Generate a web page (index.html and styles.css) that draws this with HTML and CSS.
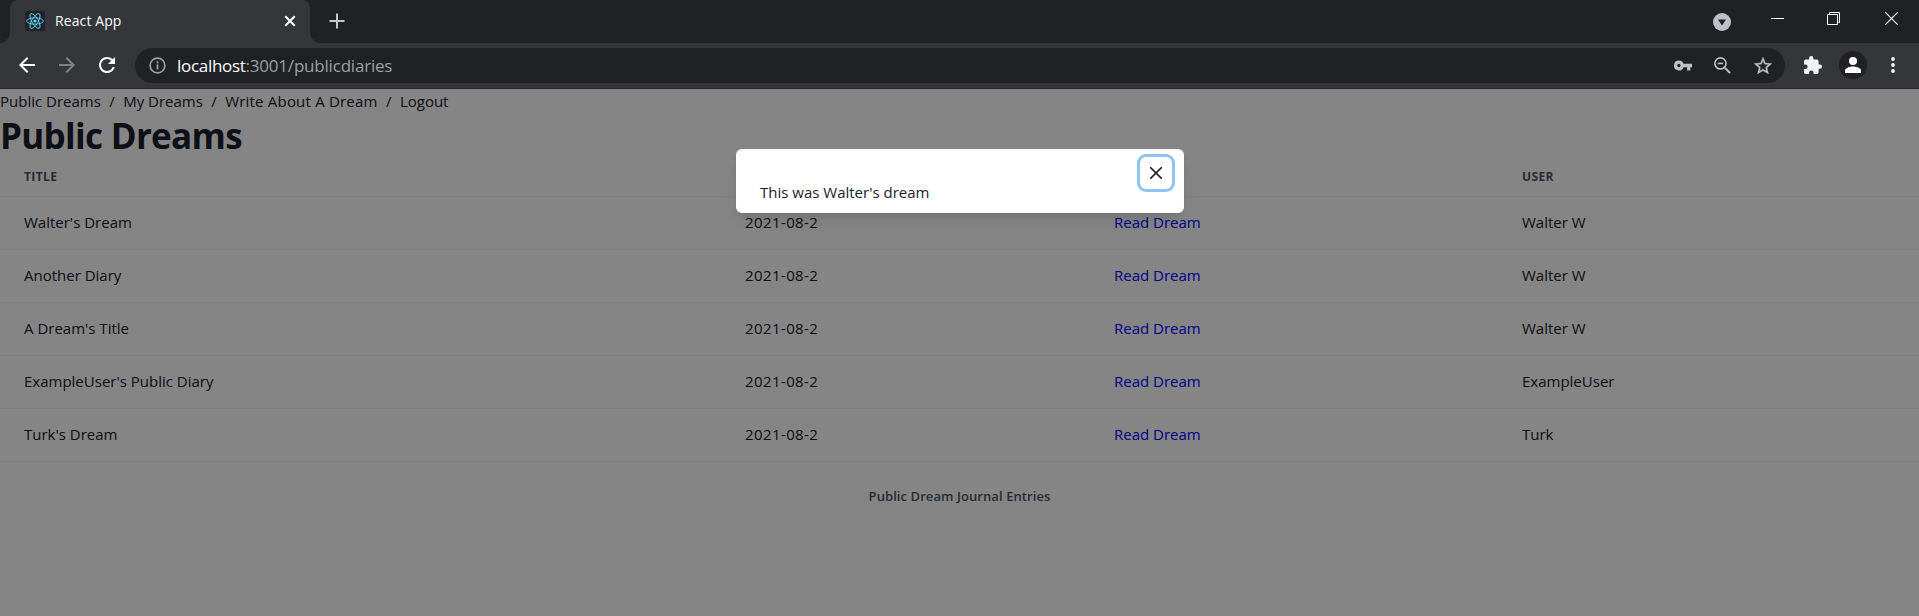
FILE: index.html
```html
<!DOCTYPE html>
<html lang="en">
<head>
<meta charset="utf-8">
<title>React App</title>
<link rel="stylesheet" href="styles.css">
</head>
<body>
<header class="browser">
  <div class="tabstrip">
    <div class="tab">
      <svg class="favicon" viewBox="0 0 20 20"><rect width="20" height="20" rx="2" fill="#20232a"/><g fill="none" stroke="#61dafb" stroke-width=".85"><ellipse cx="10" cy="10" rx="8.4" ry="3.2"/><ellipse cx="10" cy="10" rx="8.4" ry="3.2" transform="rotate(60 10 10)"/><ellipse cx="10" cy="10" rx="8.4" ry="3.2" transform="rotate(120 10 10)"/></g><circle cx="10" cy="10" r="1.6" fill="#61dafb"/></svg>
      <span class="tab-title">React App</span>
      <svg class="tab-close" viewBox="0 0 12 12"><path d="M1.3 1.3l9.4 9.4M10.7 1.3l-9.4 9.4" stroke="#fff" stroke-width="2"/></svg>
    </div>
    <svg class="new-tab" viewBox="0 0 16 16"><path d="M8 .5v15M.5 8h15" stroke="#c4c7cc" stroke-width="2"/></svg>
    <div class="window-controls">
      <svg class="tab-search" viewBox="0 0 18 18"><circle cx="9" cy="9" r="9" fill="#bdc1c6"/><path d="M5 6.5h8L9 12.5z" fill="#202124"/></svg>
      <svg class="minimize" viewBox="0 0 13 13"><path d="M0 6.5h13" stroke="#fff"/></svg>
      <svg class="restore" viewBox="0 0 13 13"><path d="M.5 2.5h10v10H.5zM2.5 2.5v-2h10v10h-2" fill="none" stroke="#fff"/></svg>
      <svg class="close" viewBox="0 0 13 13"><path d="M.3.3l12.4 12.4M12.7.3L.3 12.7" stroke="#fff" stroke-width="1.1"/></svg>
    </div>
  </div>
  <div class="toolbar">
    <svg class="nav-icon" viewBox="0 0 24 24"><path d="M20 11H7.83l5.59-5.59L12 4l-8 8 8 8 1.41-1.41L7.83 13H20z" fill="#fff"/></svg>
    <svg class="nav-icon" viewBox="0 0 24 24"><path d="M12 4l-1.41 1.41L16.17 11H4v2h12.17l-5.58 5.59L12 20l8-8z" fill="#818286"/></svg>
    <svg class="nav-icon reload" viewBox="0 0 24 24"><path d="M17.65 6.35A7.96 7.96 0 0012 4a8 8 0 107.73 10h-2.08A6 6 0 1112 6c1.66 0 3.14.69 4.22 1.78L13 11h7V4z" fill="#fff"/></svg>
    <div class="omnibox">
      <svg class="info" viewBox="0 0 17 17"><circle cx="8.5" cy="8.5" r="7.4" fill="none" stroke="#9aa0a6" stroke-width="1.7"/><path d="M8.5 7.5v5M8.5 4.3v2" stroke="#9aa0a6" stroke-width="1.8"/></svg>
      <span class="url"><span class="host">localhost</span><span class="path">:3001/publicdiaries</span></span>
      <svg class="key" viewBox="1 6 22 12"><path d="M12.65 10A6 6 0 007 6a6 6 0 105.65 8H17v4h4v-4h2v-4zM7 14a2 2 0 110-4 2 2 0 010 4z" fill="#bdc1c6"/></svg>
      <svg class="magnifier" viewBox="3 3 18 18"><path d="M14.5 14.500l5.500 5.500" stroke="#bdc1c6" stroke-width="2.200"/><circle cx="9.800" cy="9.800" r="5.900" fill="none" stroke="#bdc1c6" stroke-width="1.700"/><path d="M7 9.800h5.600" stroke="#bdc1c6" stroke-width="1.700"/></svg>
      <svg class="star" viewBox="2 2 20 19"><path d="M22 9.240l-7.190-.62L12 2 9.190 8.630 2 9.240l5.460 4.730L5.820 21 12 17.270 18.180 21l-1.630-7.030zM12 15.400l-3.760 2.270 1-4.280-3.320-2.880 4.380-.38L12 6.100l1.710 4.040 4.380.38-3.320 2.880 1 4.280z" fill="#bdc1c6" stroke="#bdc1c6" stroke-width=".3"/></svg>
    </div>
    <svg class="extensions" viewBox="2 1 21 21"><path d="M20.500 11H19V7a2 2 0 00-2-2h-4V3.500a2.500 2.500 0 00-5 0V5H4a2 2 0 00-2 2v3.800h1.500a2.700 2.700 0 010 5.400H2V20c0 1.100.9 2 2 2h3.800v-1.500a2.700 2.700 0 015.400 0V22H17a2 2 0 002-2v-4h1.500a2.500 2.500 0 000-5z" fill="#f1f3f4"/></svg>
    <svg class="avatar" viewBox="0 0 28 28"><circle cx="14" cy="14" r="14" fill="#202124"/><circle cx="14" cy="10" r="4" fill="#fff"/><path d="M6 22v-2.500c0-2.500 5-4 8-4s8 1.500 8 4V22z" fill="#fff"/></svg>
    <svg class="more" viewBox="0 0 4 16"><g fill="#f1f3f4"><circle cx="2" cy="2" r="1.9"/><circle cx="2" cy="8" r="1.9"/><circle cx="2" cy="14" r="1.9"/></g></svg>
  </div>
</header>
<main class="page">
  <nav class="breadcrumb"><a>Public Dreams</a><i>/</i><a>My Dreams</a><i>/</i><a class="write">Write About A Dream</a><i>/</i><a>Logout</a></nav>
  <h1 class="heading">Public Dreams</h1>
  <table class="dreams">
    <caption>Public Dream Journal Entries</caption>
    <colgroup><col class="col-title"><col class="col-date"><col class="col-read"><col></colgroup>
    <thead><tr><th>Title</th><th></th><th></th><th>User</th></tr></thead>
    <tbody>
      <tr><td>Walter's Dream</td><td class="date">2021-08-2</td><td><a class="read">Read Dream</a></td><td>Walter W</td></tr>
      <tr><td>Another Diary</td><td class="date">2021-08-2</td><td><a class="read">Read Dream</a></td><td>Walter W</td></tr>
      <tr><td>A Dream's Title</td><td class="date">2021-08-2</td><td><a class="read">Read Dream</a></td><td>Walter W</td></tr>
      <tr><td>ExampleUser's Public Diary</td><td class="date">2021-08-2</td><td><a class="read">Read Dream</a></td><td>ExampleUser</td></tr>
      <tr><td>Turk's Dream</td><td class="date">2021-08-2</td><td><a class="read">Read Dream</a></td><td>Turk</td></tr>
    </tbody>
  </table>
  <div class="overlay">
    <section class="modal">
      <p class="modal-text">This was Walter's dream</p>
      <button class="modal-close" aria-label="Close"><svg viewBox="0 0 12 12"><path d="M.6.600l10.800 10.800M11.400.6L.6 11.400" stroke="#1a202c" stroke-width="1.500" stroke-linecap="round"/></svg></button>
    </section>
  </div>
</main>
</body>
</html>
```
FILE: styles.css
```css
* { box-sizing: border-box; }
body { margin: 0; height: 616px; overflow: hidden; display: flex; flex-direction: column; font-family: "Open Sans", "Noto Sans", sans-serif; }
svg { display: block; flex: none; }

.browser { flex: none; height: 89px; background: #35363a; border-bottom: 1px solid #29292b; }
.tabstrip { height: 43px; background: #202124; display: flex; padding-left: 10px; }
.tab { position: relative; width: 300px; background: #35363a; border-radius: 8px 8px 0 0; display: flex; align-items: center; padding: 0 14px 2px 15px; }
.tab::before, .tab::after { content: ""; position: absolute; bottom: 0; width: 10px; height: 10px; }
.tab::before { left: -10px; background: radial-gradient(circle at 0 0, #202124 9.5px, #35363a 10px); }
.tab::after { right: -10px; background: radial-gradient(circle at 100% 0, #202124 9.5px, #35363a 10px); }
.favicon { width: 20px; height: 20px; }
.tab-title { margin-left: 10px; color: #fff; font-size: 14px; letter-spacing: .1px; flex: 1; white-space: nowrap; }
.tab-close { width: 12px; height: 12px; }
.new-tab { width: 16px; height: 16px; margin: 13px 0 0 19px; }
.window-controls { margin-left: auto; display: flex; align-items: flex-start; padding: 12px 21px 0 0; }
.tab-search { width: 18px; height: 18px; margin: 1px 40px 0 0; }
.minimize, .restore, .close { width: 13px; height: 13px; }
.restore { margin-left: 43px; }
.close { margin-left: 45px; }

.toolbar { height: 44px; display: flex; align-items: center; }
.nav-icon { width: 24px; height: 24px; margin-left: 15px; }
.nav-icon + .nav-icon { margin-left: 16px; }
.omnibox { width: 1650px; height: 35px; margin-left: 16px; border-radius: 18px; background: #202124; display: flex; align-items: center; padding: 0 13px 0 14px; }
.info { width: 17px; height: 17px; }
.url { margin-left: 11px; flex: 1; font-size: 17px; color: #9aa0a6; white-space: nowrap; }
.host { color: #fff; letter-spacing: -.3px; }
.path { letter-spacing: -.2px; }
.key { width: 18px; height: 11px; }
.magnifier { width: 17px; height: 17px; margin-left: 22px; }
.star { width: 18px; height: 17px; margin-left: 23px; }
.extensions { width: 18px; height: 18px; margin-left: 19px; }
.avatar { width: 28px; height: 28px; margin-left: 17px; }
.more { width: 4px; height: 16px; margin-left: 24px; }

.page { position: relative; flex: 1; background: #fff; color: #1a202c; font-size: 15px; line-height: 24px; }
.breadcrumb { display: flex; height: 24px; white-space: nowrap; }
.breadcrumb i { font-style: normal; margin: 0 8.4px; }
.write { letter-spacing: .2px; }
.heading { margin: 0; height: 43px; padding-top: 1px; font-size: 35px; line-height: 43px; font-weight: 700; letter-spacing: -.7px; }
.dreams { width: 100%; table-layout: fixed; border-collapse: separate; border-spacing: 0; }
.dreams caption { caption-side: bottom; margin-top: 16px; padding: 8px 24px; font-size: 13px; line-height: 21px; font-weight: 600; letter-spacing: .08px; color: #4a5568; }
.col-title { width: 721px; }
.col-date { width: 369px; }
.col-read { width: 408px; }
.dreams th { height: 41px; padding: 13px 24px 11px; font-size: 12px; line-height: 16px; font-weight: 700; text-align: left; text-transform: uppercase; letter-spacing: .4px; color: #4a5568; border-bottom: 1px solid #edf2f7; }
.dreams td { height: 53px; padding: 13px 24px 15px; border-bottom: 1px solid #edf2f7; white-space: nowrap; }
.dreams .date { letter-spacing: .4px; }
.read { color: #0000ff; }

.overlay { position: absolute; inset: 0; background: rgba(0, 0, 0, .48); display: flex; justify-content: center; align-items: flex-start; padding-top: 60px; }
.modal { position: relative; width: 448px; height: 64px; margin-left: 1px; padding: 31px 24px 9px; background: #fff; border-radius: 6px; box-shadow: 0 10px 15px -3px rgba(0, 0, 0, .1), 0 4px 6px -2px rgba(0, 0, 0, .05); }
.modal-text { margin: 0; }
.modal-close { position: absolute; top: 8px; right: 12px; width: 32px; height: 32px; padding: 0; border: 0; border-radius: 6px; background: none; box-shadow: 0 0 0 3px #90c3ee; display: flex; align-items: center; justify-content: center; }
.modal-close svg { width: 12px; height: 12px; }
```
